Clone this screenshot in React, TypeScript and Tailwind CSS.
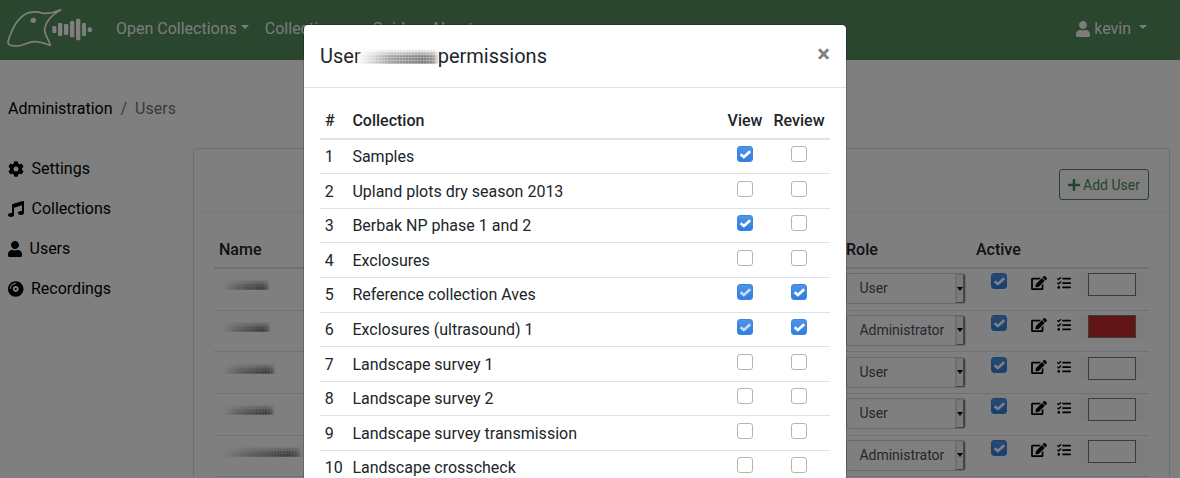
import type { ReactNode } from 'react';
import { FaCog, FaCompactDisc, FaEdit, FaMusic, FaPlus, FaTasks, FaUser } from 'react-icons/fa';

type Role = 'User' | 'Administrator';

interface Account {
  role: Role;
  color: string;
  smudge: string;
}

interface Permission {
  name: string;
  view: boolean;
  review: boolean;
}

const accounts: Account[] = [
  { role: 'User', color: 'bg-white', smudge: 'w-[48px]' },
  { role: 'Administrator', color: 'bg-[#c0282c]', smudge: 'w-[49px]' },
  { role: 'User', color: 'bg-white', smudge: 'w-[54px]' },
  { role: 'User', color: 'bg-white', smudge: 'w-[53px]' },
  { role: 'Administrator', color: 'bg-white', smudge: 'w-[81px]' },
];

const permissions: Permission[] = [
  { name: 'Samples', view: true, review: false },
  { name: 'Upland plots dry season 2013', view: false, review: false },
  { name: 'Berbak NP phase 1 and 2', view: true, review: false },
  { name: 'Exclosures', view: false, review: false },
  { name: 'Reference collection Aves', view: true, review: true },
  { name: 'Exclosures (ultrasound) 1', view: true, review: true },
  { name: 'Landscape survey 1', view: false, review: false },
  { name: 'Landscape survey 2', view: false, review: false },
  { name: 'Landscape survey transmission', view: false, review: false },
  { name: 'Landscape crosscheck', view: false, review: false },
];

function Checkbox({ checked, disabled = false }: { checked: boolean; disabled?: boolean }) {
  if (!checked) {
    return <span className="block size-4 rounded-[3px] border border-[#bcb3ab] bg-white" />;
  }
  return (
    <span className="block size-4 rounded-[3px] border border-[#3d84dc] bg-linear-to-b from-[#4d93e8] to-[#2f7de1]">
      <svg viewBox="0 0 14 14" className={disabled ? 'size-3.5 opacity-70' : 'size-3.5'}>
        <path d="M2.6 7.2 L5.9 10 L12.2 4.3" fill="none" stroke="white" strokeWidth="2.7" />
      </svg>
    </span>
  );
}

function Caret() {
  return (
    <svg viewBox="0 0 8 4" className="mb-1 h-1 w-2">
      <path d="M0 0h8L4 4z" fill="currentColor" />
    </svg>
  );
}

function Logo() {
  return (
    <svg viewBox="0 0 300 180" className="h-[60px] w-[100px] shrink-0">
      <path
        d="M182 29 C165 37 148 41 129 40 C113 35 94 34 78 41 C53 54 36 86 25 121 C21 134 30 138 50 138 C72 137 78 127 102 125 C121 124 135 131 151 136 C148 119 132 105 134 86 C137 64 151 47 182 29 Z"
        fill="none"
        stroke="white"
        strokeWidth="5"
        strokeLinejoin="round"
      />
      <circle cx="100" cy="61" r="8" fill="white" />
      <g fill="white">
        <rect x="157" y="78" width="12" height="21" rx="4" />
        <rect x="174" y="69" width="13" height="39" rx="4" />
        <rect x="192" y="72" width="13" height="33" rx="4" />
        <rect x="210" y="63" width="13" height="49" rx="4" />
        <rect x="228" y="56" width="13" height="65" rx="4" />
        <rect x="246" y="69" width="12" height="39" rx="4" />
        <rect x="263" y="82" width="13" height="14" rx="5" />
      </g>
    </svg>
  );
}

function NameSmudge({ width }: { width: string }) {
  return (
    <span
      className={`block h-[11px] mask-t-from-30% bg-[repeating-linear-gradient(0deg,rgba(255,255,255,0.2)_0_1px,transparent_1px_3px),repeating-linear-gradient(90deg,rgba(255,255,255,0.16)_0_1px,transparent_1px_3px),linear-gradient(90deg,rgba(60,60,60,0)_0%,rgba(60,60,60,0.35)_35%,rgba(45,45,45,0.62)_82%,rgba(60,60,60,0.5)_92%,rgba(60,60,60,0)_100%)] ${width}`}
    />
  );
}

function TitleSmudge() {
  return (
    <span className="relative -ml-1 block h-[15px] w-[82px] mask-t-from-50% bg-[repeating-linear-gradient(0deg,rgba(255,255,255,0.3)_0_1px,transparent_1px_3px),repeating-linear-gradient(90deg,rgba(255,255,255,0.16)_0_1px,transparent_1px_3px),linear-gradient(90deg,rgba(255,255,255,0.4)_0%,rgba(215,215,215,0.9)_18%,rgba(165,165,165,1)_40%,rgba(125,125,125,1)_80%,rgba(150,150,150,1)_93%,rgba(230,230,230,0.4)_100%)]" />
  );
}

function SideLink({ icon, label }: { icon: ReactNode; label: string }) {
  return (
    <a className="flex h-10 items-center gap-[7.5px] text-black">
      {icon}
      {label}
    </a>
  );
}

function RoleSelect({ role }: { role: Role }) {
  return (
    <span className="flex h-[31px] w-[120px] items-stretch justify-between overflow-hidden rounded-[3px] border border-[#ced4da] bg-white pl-[12.4px] text-sm leading-[29px] text-[#495057]">
      {role}
      <span className="flex w-[10px] items-center justify-center border-y border-l-2 border-r-2 border-t-[#d8d8d8] border-r-[#8a8a8a] border-b-[#8a8a8a] border-l-[#dedede] bg-[#f4f4f4]">
        <svg viewBox="0 0 6 4" className="h-1 w-1.5 shrink-0">
          <path d="M0 0h6L3 4z" fill="black" />
        </svg>
      </span>
    </span>
  );
}

function Navbar() {
  return (
    <nav className="flex h-[60px] items-center bg-[#568d5f] pr-[33px] text-white/95">
      <Logo />
      <div className="flex flex-1 gap-4 pb-[3px] pl-4">
        <a className="flex items-center gap-1">Open Collections <Caret /></a>
        <a className="flex items-center gap-1">Collections <Caret /></a>
        <a>Guides</a>
        <a className="-ml-[7px]">About</a>
      </div>
      <a className="flex items-center gap-1 pb-[3px]">
        <FaUser className="h-4 w-[14px]" />
        kevin
        <span className="ml-1"><Caret /></span>
      </a>
    </nav>
  );
}

function UsersCard() {
  return (
    <section className="mt-10 h-[600px] w-[977px] rounded border border-black/[.125]">
      <header className="flex h-16 items-start justify-end border-b border-black/5 pt-5 pr-5">
        <button className="flex h-[31px] w-[90px] items-center justify-center gap-[3px] rounded-[3px] border border-[#4b8a57] text-sm text-[#4b8a57]">
          <FaPlus className="h-3.5 w-3" />
          Add User
        </button>
      </header>
      <div className="pt-5 pr-5 pl-5">
        <div className="flex h-9 border-b-2 border-[#dee2e6] pt-[5px] font-medium">
          <span className="w-[632px] pl-[5px]">Name</span>
          <span className="w-[130px]">Role</span>
          <span>Active</span>
        </div>
        {accounts.map((account, i) => (
          <div key={i} className="flex h-[41.7px] items-start border-b border-[#dee2e6] pt-[4.2px]">
            <div className="w-[632px] pt-[6px] pl-2">
              <NameSmudge width={account.smudge} />
            </div>
            <RoleSelect role={account.role} />
            <div className="ml-[25px]"><Checkbox checked /></div>
            <FaEdit className="mt-[3px] ml-6 h-3.5 w-4 text-black" />
            <FaTasks className="mt-[3px] ml-2.5 size-3.5 text-black" />
            <div className="ml-[9px] flex h-[23px] w-16 justify-center bg-[#f8f8f8]">
              <span className={`block w-12 border border-[#777] ${account.color}`} />
            </div>
          </div>
        ))}
      </div>
    </section>
  );
}

function PermissionsDialog() {
  return (
    <div className="h-[560px] w-[544px] rounded-[5px] border border-black/20 bg-white bg-clip-padding">
      <header className="flex h-[63px] items-start justify-between border-b border-[#dee2e6] px-4 pt-4">
        <h5 className="flex items-center text-xl leading-[30px] font-normal">
          User
          <TitleSmudge />
          <span className="-ml-px">permissions</span>
        </h5>
        <button className="mt-px h-6 text-2xl leading-6 font-bold text-black/50">×</button>
      </header>
      <div className="px-4 pt-4">
        <div className="flex h-9 border-b-2 border-[#dee2e6] pt-[5px] font-medium">
          <span className="w-8 pl-[5px]">#</span>
          <span className="w-[366px] pl-[0.4px]">Collection</span>
          <span className="w-[54px] text-center">View</span>
          <span className="w-[54px] text-center">Review</span>
        </div>
        {permissions.map((item, i) => (
          <div
            key={item.name}
            className={`flex items-start border-b border-[#dee2e6] ${i === 0 ? 'h-[34.2px] pt-[4.6px]' : 'h-[34.6px] pt-[5.35px]'}`}
          >
            <span className="w-8 pl-[4.8px]">{i + 1}</span>
            <span className="w-[366px] pl-[0.4px]">{item.name}</span>
            <span className="flex w-[54px] justify-center pt-[1.05px]">
              <Checkbox checked={item.view} disabled={item.review} />
            </span>
            <span className="flex w-[54px] justify-center pt-[1.05px]">
              <Checkbox checked={item.review} />
            </span>
          </div>
        ))}
      </div>
    </div>
  );
}

export default function App() {
  return (
    <div className="relative h-[478px] w-[1180px] overflow-hidden bg-white font-['Roboto',sans-serif] text-base leading-6 text-[#212529]">
      <Navbar />
      <main className="flex pl-2">
        <aside className="w-[185px] shrink-0 pt-[37px]">
          <div className="flex gap-2 whitespace-nowrap">
            <span className="text-black">Administration</span>
            <span className="text-[#6c757d]">/</span>
            <span className="text-[#6c757d]">Users</span>
          </div>
          <div className="pt-7">
            <SideLink icon={<FaCog className="size-4" />} label="Settings" />
            <SideLink icon={<FaMusic className="size-4" />} label="Collections" />
            <SideLink icon={<FaUser className="h-4 w-[14px]" />} label="Users" />
            <SideLink icon={<FaCompactDisc className="h-4 w-[15.5px]" />} label="Recordings" />
          </div>
        </aside>
        <div className="pt-12">
          <UsersCard />
        </div>
      </main>
      <div className="absolute inset-0 overflow-hidden bg-black/50 pt-6 pl-[303px]">
        <PermissionsDialog />
      </div>
    </div>
  );
}
